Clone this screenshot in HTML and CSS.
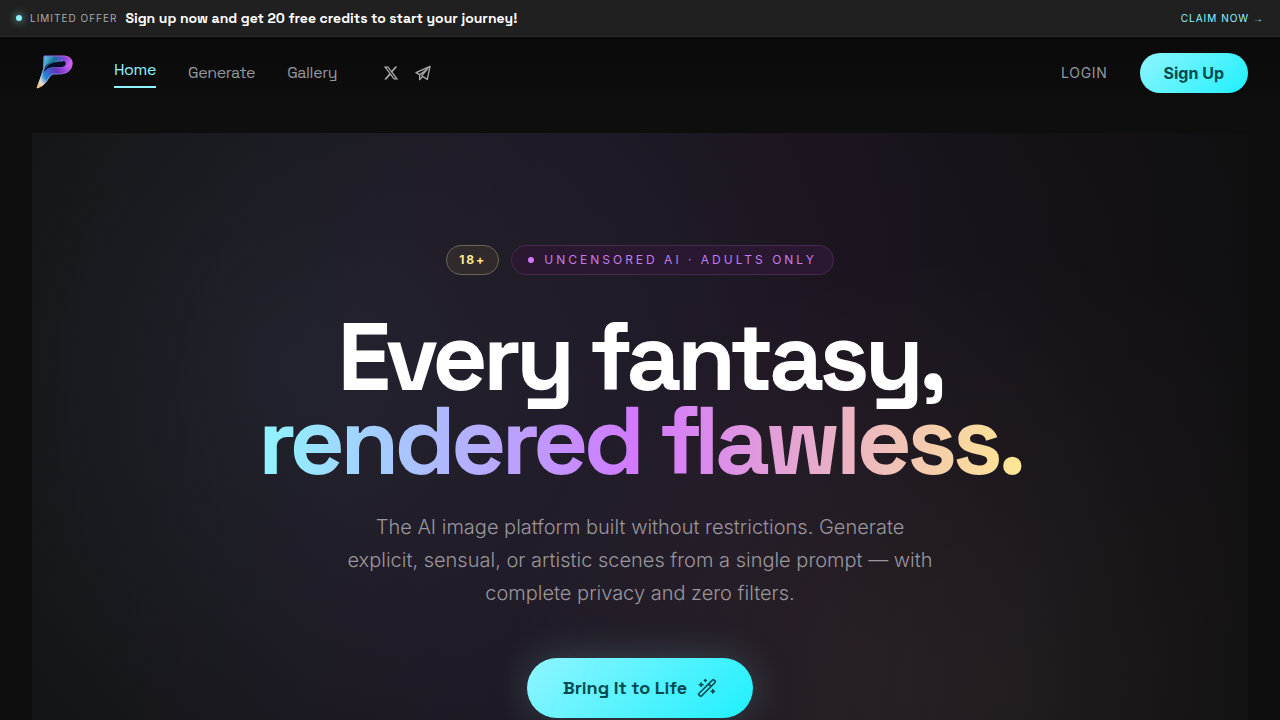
FILE: index.html
```html
<!DOCTYPE html>
<html lang="en">
<head>
<meta charset="utf-8">
<meta name="viewport" content="width=device-width, initial-scale=1">
<title>Every fantasy, rendered flawless.</title>
<link rel="stylesheet" href="styles.css">
</head>
<body>
<aside class="banner">
  <span class="banner-dot"></span>
  <span class="banner-label">LIMITED OFFER</span>
  <strong class="banner-text">Sign up now and get 20 free credits to start your journey!</strong>
  <a class="banner-link" href="#">CLAIM NOW <span class="arrow">→</span></a>
</aside>
<header class="header">
  <a class="logo" href="#" aria-label="Home page">
    <svg width="50" height="48" viewBox="2 0 50 48" fill="none">
      <defs>
        <linearGradient id="edge" x1="8" y1="39" x2="42" y2="12" gradientUnits="userSpaceOnUse">
          <stop offset="0" stop-color="#ffc27a"/><stop offset=".16" stop-color="#f8e5ce"/><stop offset=".32" stop-color="#62b4f4"/><stop offset=".6" stop-color="#7868ee"/><stop offset="1" stop-color="#e45cf5"/>
        </linearGradient>
        <linearGradient id="body" x1="14" y1="6" x2="42" y2="20" gradientUnits="userSpaceOnUse">
          <stop offset="0" stop-color="#67dce4"/><stop offset=".35" stop-color="#1b6d9d"/><stop offset=".65" stop-color="#8a45d6"/><stop offset="1" stop-color="#ef79f8"/>
        </linearGradient>
        <linearGradient id="tail" x1="8" y1="39" x2="40" y2="18" gradientUnits="userSpaceOnUse">
          <stop offset="0" stop-color="#ff9e42"/><stop offset=".14" stop-color="#eedfd8"/><stop offset=".32" stop-color="#2385d6"/><stop offset=".65" stop-color="#6534bc"/><stop offset="1" stop-color="#c85af0"/>
        </linearGradient>
      </defs>
      <path d="M14 7H33C40 7 43 11 42 16C41 22 36 25 29 25H23C20 25 18 28 16 32C14 36 11 38 7 39L13 20Z" fill="url(#body)"/>
      <path d="M7 39L13 24C16 19 20 19 26 19H32C37 19 41 17 42 14C41 22 36 25 29 25H24C19 25 18 36 7 39Z" fill="url(#tail)"/>
      <path d="M14 19C18 13 23 12 30 12H33C37 12 37 18 31 18H24C19 18 16 20 13 24Z" fill="#080d2c"/>
      <path d="M13 22C17 14 23 12 33 12" stroke="#3bb9d5" stroke-width=".8"/>
      <path d="M14 7H33C40 7 43 11 42 16C41 22 36 25 29 25H24C18 25 18 36 7 39L14 20L14 7Z" stroke="url(#edge)" stroke-width="1"/>
    </svg>
  </a>
  <nav class="nav" aria-label="Main">
    <a class="nav-link nav-link-active" href="#">Home</a>
    <a class="nav-link" href="#">Generate</a>
    <a class="nav-link" href="#">Gallery</a>
  </nav>
  <div class="social">
    <a href="#" aria-label="X">
      <svg width="16" height="16" viewBox="0 0 24 24" fill="currentColor"><path d="M18.244 2.250h3.308l-7.227 8.260 8.502 11.240H16.170l-5.214-6.817L4.990 21.750H1.680l7.730-8.835L1.254 2.250H8.080l4.713 6.231zm-1.161 17.520h1.833L7.084 4.126H5.117z"/></svg>
    </a>
    <a href="#" aria-label="Telegram">
      <svg width="16" height="16" viewBox="0 0 24 24" fill="none" stroke="currentColor" stroke-width="2" stroke-linejoin="round" stroke-linecap="round"><path d="M22.500 2 1.500 11.500 7 14.500 19 5.500 10 16.200 18.500 21.500zM7 14.500V22L11.500 17.200"/></svg>
    </a>
  </div>
  <div class="account">
    <a class="login" href="#">LOGIN</a>
    <button class="signup" type="button">Sign Up</button>
  </div>
</header>
<main class="page">
  <section class="hero">
    <div class="badges">
      <span class="badge-age">18+</span>
      <span class="badge-note"><span class="note-dot"></span>UNCENSORED AI · ADULTS ONLY</span>
    </div>
    <h1 class="title">Every fantasy,<br><span class="title-accent">rendered flawless.</span></h1>
    <p class="lead">The AI image platform built without restrictions. Generate explicit, sensual, or artistic scenes from a single prompt — with complete privacy and zero filters.</p>
    <button class="cta" type="button">Bring It to Life
      <svg width="20" height="20" viewBox="0 0 24 24" fill="none" stroke="currentColor" stroke-width="2" stroke-linecap="round" stroke-linejoin="round"><path d="m21.640 3.640-1.280-1.280a1.210 1.210 0 0 0-1.720 0L2.360 18.640a1.210 1.210 0 0 0 0 1.720l1.280 1.280a1.200 1.200 0 0 0 1.720 0L21.640 5.360a1.200 1.200 0 0 0 0-1.720M14 7l3 3M5 6v4M19 14v4M10 2v2M7 8H3M21 16h-4M11 3H9"/></svg>
    </button>
  </section>
</main>
</body>
</html>
```
FILE: styles.css
```css
* { box-sizing: border-box; }

body {
  margin: 0;
  background: #0e0e0e;
  color: #fff;
  font-family: Inter, "Liberation Sans", sans-serif;
}

a { color: inherit; text-decoration: none; }
button { border: 0; font-family: inherit; cursor: pointer; }
svg { display: block; }

.banner {
  display: flex;
  align-items: center;
  gap: 8px;
  padding: 8px 16px;
  background: #202020;
  border-bottom: 1px solid #2b2b2b;
  line-height: 20px;
}
.banner-dot {
  width: 6px;
  height: 6px;
  border-radius: 50%;
  background: #8ff5ff;
  box-shadow: 0 0 8px #8ff5ff;
}
.banner-label { color: #adaaaa; font-size: 10px; letter-spacing: 1px; }
.banner-text { font-family: "Space Grotesk", Inter, sans-serif; font-size: 14px; font-weight: 600; }
.banner-link { margin-left: auto; color: #8ff5ff; font-size: 10px; letter-spacing: 1px; }
.arrow { font-family: "Liberation Sans", sans-serif; line-height: 10px; }

.header {
  display: flex;
  align-items: center;
  padding: 12px 32px;
  background: linear-gradient(#0a0a0a, #0e0e0e);
}
.logo { width: 50px; }
.nav {
  display: flex;
  align-items: center;
  gap: 32px;
  margin-left: 32px;
  font-family: "Space Grotesk", Inter, sans-serif;
  font-size: 16px;
  letter-spacing: -0.025em;
  line-height: 24px;
  color: #94979e;
}
.nav-link-active {
  padding-bottom: 4px;
  border-bottom: 2px solid #8ff5ff;
  color: #8ff5ff;
}
.social { display: flex; gap: 16px; margin-left: 46px; color: #adaaaa; }
.account { display: flex; align-items: center; gap: 32px; margin-left: auto; }
.login { color: #94979e; font-size: 14px; letter-spacing: 0.05em; line-height: 20px; }
.signup {
  padding: 8px 24px;
  border-radius: 20px;
  background: linear-gradient(135deg, #8ff5ff, #1ff0fd);
  color: #004a50;
  font-size: 16px;
  font-weight: 700;
  line-height: 24px;
}

.page { padding: 24px 32px 0; }
.hero {
  display: flex;
  flex-direction: column;
  align-items: center;
  padding: 112px 24px 2px;
  text-align: center;
  background:
    linear-gradient(90deg, transparent 65%, rgba(14, 14, 14, .6)),
    radial-gradient(ellipse 46% 100% at 22% 40%, rgba(143, 220, 255, .07), transparent),
    radial-gradient(ellipse 42% 75% at 80% 95%, rgba(255, 231, 146, .07), transparent),
    radial-gradient(ellipse 56% 130% at 54% 55%, rgba(190, 80, 240, .08), rgba(190, 80, 240, .06) 50%, transparent),
    #111112;
}
.badges { display: flex; gap: 12px; font-size: 12px; line-height: 16px; }
.badge-age, .badge-note { padding: 6px 16px; border: 1px solid; border-radius: 15px; }
.badge-age {
  padding: 6px 12px;
  border-color: #6e6655;
  background: #302a2c;
  color: #ffe792;
  font-weight: 700;
  letter-spacing: 2px;
}
.badge-note {
  display: flex;
  align-items: center;
  gap: 10px;
  border-color: #46294f;
  background: #29182f;
  color: #c27df0;
  letter-spacing: 3px;
}
.note-dot { width: 6px; height: 6px; border-radius: 50%; background: #d277ff; }
.title {
  margin: 40px 0 0;
  font-family: "Space Grotesk", Inter, sans-serif;
  font-size: 96px;
  font-weight: 700;
  letter-spacing: -0.05em;
  line-height: 84px;
}
.title-accent {
  background: linear-gradient(90deg, #8ff5ff, #d277ff 50%, #ffe792);
  background-clip: text;
  -webkit-background-clip: text;
  color: transparent;
}
.lead {
  max-width: 592px;
  margin: 28px 0 0;
  color: #9a969d;
  font-size: 20px;
  font-variation-settings: "opsz" 20;
  font-weight: 300;
  line-height: 33px;
}
.cta {
  display: flex;
  align-items: center;
  gap: 10px;
  margin-top: 48px;
  padding: 16px 36px;
  border-radius: 30px;
  background: linear-gradient(135deg, #8ff5ff, #1ff0fd);
  box-shadow: 0 0 40px rgba(143, 245, 255, .2);
  color: #004a50;
  font-family: "Space Grotesk", Inter, sans-serif;
  font-size: 18px;
  font-weight: 700;
  line-height: 28px;
}
```
